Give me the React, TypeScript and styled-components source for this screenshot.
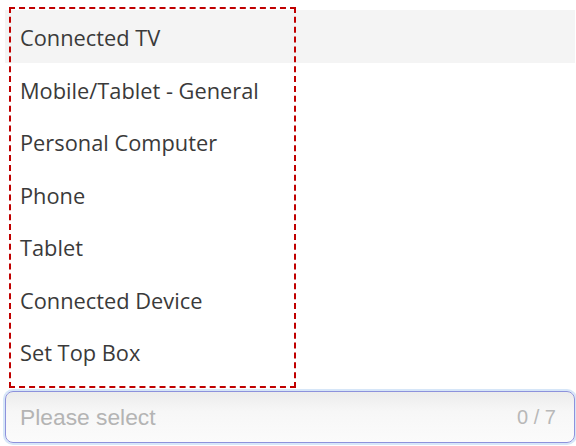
import React from "react";
import styled, { createGlobalStyle } from "styled-components";

const GlobalStyle = createGlobalStyle`
  html, body {
    margin: 0;
    padding: 0;
    background: #ffffff;
  }
`;

const Page = styled.div`
  width: 576px;
  height: 446px;
  padding: 10px 1px 0 5px;
  box-sizing: border-box;
  display: flex;
  flex-direction: column;
`;

const List = styled.div`
  position: relative;
  display: flex;
  flex-direction: column;
  padding-bottom: 10px;
`;

const Row = styled.div<{ active?: boolean }>`
  height: 52.5px;
  display: flex;
  align-items: center;
  padding: 3px 0 0 15px;
  box-sizing: border-box;
  background: ${(p) => (p.active ? "#f4f4f4" : "transparent")};
  font-family: "Open Sans", "Noto Sans", sans-serif;
  font-size: 21.8px;
  color: #3a3a3a;
`;

const FocusFrame = styled.div`
  position: absolute;
  left: 4px;
  top: -3px;
  width: 287px;
  bottom: 0;
  border: 2px dashed #c00000;
  box-sizing: border-box;
  pointer-events: none;
`;

const Select = styled.div`
  margin-top: 3px;
  height: 52px;
  box-sizing: border-box;
  border: 1.5px solid #8d92dc;
  border-radius: 8px;
  box-shadow: 0 0 0 2px #d6e6f8;
  background: linear-gradient(#ececec, #f7f7f7 40%, #fbfbfb);
  display: flex;
  align-items: center;
  justify-content: space-between;
  padding: 1px 18px 0 14px;
  font-family: "Liberation Sans", Arial, sans-serif;
  font-size: 22.8px;
  color: #b4b4b4;
`;

const Counter = styled.span`
  font-size: 20px;
  color: #b8b8b8;
`;

const options = [
  "Connected TV",
  "Mobile/Tablet - General",
  "Personal Computer",
  "Phone",
  "Tablet",
  "Connected Device",
  "Set Top Box",
];

export default function App() {
  return (
    <>
      <GlobalStyle />
      <Page>
        <List>
          {options.map((o, i) => (
            <Row key={o} active={i === 0}>
              {o}
            </Row>
          ))}
          <FocusFrame />
        </List>
        <Select>
          <span>Please select</span>
          <Counter>0 / 7</Counter>
        </Select>
      </Page>
    </>
  );
}
